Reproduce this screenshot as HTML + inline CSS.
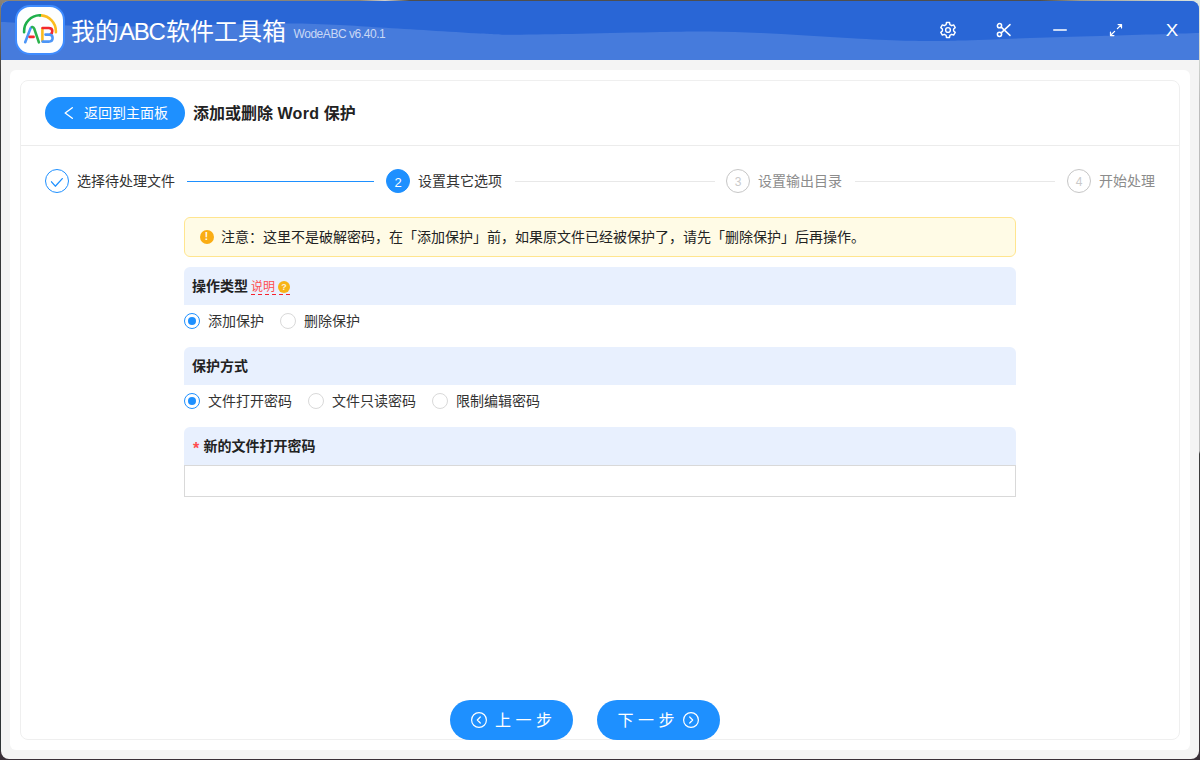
<!DOCTYPE html>
<html lang="zh-CN">
<head>
<meta charset="utf-8">
<title>我的ABC软件工具箱</title>
<style>
*{box-sizing:border-box;margin:0;padding:0}
html,body{width:1200px;height:760px;overflow:hidden}
body{font-family:"Liberation Sans","Noto Sans CJK SC",sans-serif;color:#222;position:relative;
background:linear-gradient(90deg,#8a8478 0,#8a8478 360px,#d0d0d0 385px,#4e4e4e 410px,#4e4e4e 1040px,#9a9a90 1080px,#dfe8e2 1200px);}
.bgl{position:absolute;left:0;top:0;width:2px;height:760px;background:linear-gradient(180deg,#8a8478 0,#3a3a3a 80px,#2e3436 760px)}
.bgr{position:absolute;right:0;top:0;width:2px;height:760px;background:linear-gradient(180deg,#dfe8e2 0,#d0d4d0 60px,#bdbdbd 100px,#bdbdbd 451px,#3c3c3c 454px,#3a3338 760px)}
.bgb{position:absolute;left:0;bottom:0;width:1200px;height:9px;background:#3a3038}
.win{position:absolute;left:1px;top:1px;width:1198px;height:758px;border-radius:8px;background:#f4f4f4;overflow:hidden}
.hdr{position:absolute;left:0;top:0;width:1198px;height:59px;background:#467bdc}
.hdr svg.wave{position:absolute;left:0;top:0}
.logo{position:absolute;left:14px;top:4px;width:50px;height:50px;border-radius:15px;background:#fdfeff;border:2.5px solid #3f8cff}
.title{position:absolute;left:70px;top:13px;font-size:24px;line-height:36px;color:#fff;white-space:nowrap}
.ver{position:absolute;left:292.5px;top:25px;font-size:12px;line-height:16px;color:#c9d8f5;white-space:nowrap;letter-spacing:-0.45px}
.ico{position:absolute}
.xbtn{position:absolute;left:1164px;top:19px;width:14px;text-align:center;font-size:17px;line-height:22px;color:#fff;transform:scaleX(1.1)}
.panel{position:absolute;left:9px;top:69px;width:1180px;height:680px;background:#fff;border-radius:6px}
.card{position:absolute;left:19px;top:79px;width:1160px;height:660px;background:#fff;border:1px solid #efefef;border-radius:8px}
.back{position:absolute;left:44px;top:96px;width:140px;height:32px;border-radius:16px;background:#1e90ff;color:#fff;font-size:14px;line-height:32px;white-space:nowrap}
.back span{position:absolute;left:39px;top:0}
.ptitle{position:absolute;left:192px;top:101px;font-size:16px;line-height:24px;font-weight:bold;color:#222;white-space:nowrap}
.hr{position:absolute;left:20px;top:144px;width:1158px;height:1px;background:#ececec}
.step{position:absolute;top:168px;height:24px;font-size:14px;line-height:24px;white-space:nowrap;color:#333}
.step .c{position:absolute;left:0;top:0;width:24px;height:24px;border-radius:50%;border:1px solid #1e90ff;text-align:center;font-size:12px;line-height:22px}
.step .t{position:absolute;left:32px;top:0}
.line{position:absolute;top:180px;height:1px;background:#e8e8e8}
.alert{position:absolute;left:183px;top:216px;width:832px;height:40px;border:1px solid #ffe58f;background:#fffbe6;border-radius:6px;font-size:14px;line-height:38px;color:#222;white-space:nowrap}
.alert span{position:absolute;left:36px;top:0}
.alert i{position:absolute;left:14.500px;top:12px;width:14px;height:14px;border-radius:50%;background:#faad14;color:#fff;font-style:normal;font-weight:bold;font-size:10px;line-height:14px;text-align:center}
.sec{position:absolute;left:183px;width:832px;height:38px;background:#e8f0fe;border-radius:6px 6px 0 0;font-size:14px;font-weight:bold;line-height:38px;padding-left:8px;color:#222;white-space:nowrap}
.tip{position:absolute;left:67px;top:12px;font-size:12px;line-height:16px;font-weight:normal;color:#ff4d4f;height:16px;width:39px;background:repeating-linear-gradient(90deg,#f5222d 0,#f5222d 4px,transparent 4px,transparent 7px) left bottom/39px 1px no-repeat}
.q{position:absolute;left:94px;top:14px;width:12px;height:12px;border-radius:50%;background:#f7b417;color:rgba(255,255,255,.85);font-style:normal;font-weight:bold;font-size:9px;line-height:12px;text-align:center}
.req{display:inline-block;width:11.500px;color:#ff4d4f;font-size:16px;font-weight:bold;position:relative;top:2.500px;left:1px;line-height:16px;vertical-align:top;margin-top:11px;height:16px}
.radio{position:absolute;height:20px;font-size:14px;line-height:20px;white-space:nowrap;color:#333}
.radio i{position:absolute;left:0;top:2px;width:16px;height:16px;border-radius:50%;border:1px solid #d9d9d9;background:#fff}
.radio.on i{border-color:#1e90ff}
.radio.on i:after{content:"";position:absolute;left:3px;top:3px;width:8px;height:8px;border-radius:50%;background:#1e90ff}
.radio span{position:absolute;left:24px;top:0}
.input{position:absolute;left:183px;top:464px;width:832px;height:32px;border:1px solid #d9d9d9;background:#fff}
.btn{position:absolute;top:699px;width:123px;height:40px;border-radius:20px;background:#1e90ff;color:#fff;font-size:16px;line-height:40px;white-space:nowrap}
</style>
</head>
<body>
<div class="bgl"></div><div class="bgr"></div><div class="bgb"></div>
<div class="win">
  <div class="hdr">
    <svg class="wave" width="1198" height="59" viewBox="0 0 1198 59"><path d="M-1.0 21.0C4.8 21.3 22.7 22.2 34.0 22.8C45.3 23.4 54.5 24.1 67.0 24.5C79.5 24.9 95.3 25.2 109.0 25.3C122.7 25.4 134.0 25.5 149.0 25.3C164.0 25.1 182.3 24.4 199.0 24.0C215.7 23.6 234.0 23.1 249.0 22.9C264.0 22.7 274.0 22.4 289.0 22.6C304.0 22.8 324.0 23.4 339.0 24.0C354.0 24.6 364.0 25.6 379.0 26.5C394.0 27.4 412.3 28.5 429.0 29.5C445.7 30.5 465.7 31.8 479.0 32.5C492.3 33.2 492.3 33.7 509.0 33.7C525.7 33.8 554.0 33.2 579.0 32.8C604.0 32.3 637.3 31.4 659.0 31.0C680.7 30.6 692.3 30.3 709.0 30.5C725.7 30.7 742.3 31.3 759.0 32.0C775.7 32.7 792.3 33.8 809.0 34.7C825.7 35.7 842.3 36.9 859.0 37.7C875.7 38.6 895.7 39.4 909.0 39.8C922.3 40.2 930.7 40.0 939.0 40.0C947.3 40.0 944.0 40.0 959.0 39.5C974.0 39.0 1005.7 37.8 1029.0 37.0C1052.3 36.2 1070.7 35.8 1099.0 35.0C1127.3 34.2 1182.3 32.5 1199.0 32.0V-1H-1Z" fill="#2966d6"/></svg>
    <div class="logo"><svg width="50" height="50" viewBox="15 5 50 50" style="position:absolute;left:-2.5px;top:-2.5px" fill="none" stroke-width="2.6" stroke-linecap="round" stroke-linejoin="round">
      <path d="M41 15.33A15.9 15.9 0 0 1 55.9 31.2V32.3" stroke="#fbbc1f"/>
      <path d="M24.1 32.3V31.2A15.9 15.9 0 0 1 39.500 15.310" stroke="#1eaf4b"/>
      <path d="M39 15.330A15.9 15.9 0 0 1 41 15.330" stroke="#1eaf4b" stroke-linecap="butt"/>
      <path d="M25.2 42.2L30.4 28.6Q31.2 27 32.2 27" stroke="#4c95f7"/>
      <path d="M32.2 27Q33.6 27 34.3 28.8L38.9 42.3" stroke="#2bb24c"/>
      <path d="M29.6 36.9H33.6" stroke="#f4282d"/>
      <path d="M42.4 28.6V41" stroke="#fbbc1f"/>
      <path d="M42.6 28H48.6Q52.3 28 52.3 31Q52.3 33.2 50.8 34" stroke="#f4282d"/>
      <path d="M45.5 34.6H49.5Q52.6 34.8 52.6 38Q52.6 41.6 48.6 41.6H42.6" stroke="#4c95f7"/>
    </svg></div>
    <div class="title">我的<span style="letter-spacing:-1.2px;margin-right:1.2px">ABC</span>软件工具箱</div>
    <div class="ver">WodeABC v6.40.1</div>
    <svg class="ico" style="left:938px;top:20px" width="18" height="18" viewBox="0 0 18 18" fill="none" stroke="#fff" stroke-width="1.4" stroke-linejoin="round"><path d="M7.13 3.62L7.42 1.57L10.58 1.57L10.87 3.62L12.72 4.69L14.65 3.91L16.23 6.65L14.60 7.93L14.60 10.07L16.23 11.35L14.65 14.09L12.72 13.31L10.87 14.38L10.58 16.43L7.42 16.43L7.13 14.38L5.28 13.31L3.35 14.09L1.77 11.35L3.40 10.07L3.40 7.93L1.77 6.65L3.35 3.91L5.28 4.69Z"/><circle cx="9" cy="9" r="2.4"/></svg>
    <svg class="ico" style="left:994px;top:20px" width="18" height="18" viewBox="0 0 18 18" fill="none" stroke="#fff" stroke-width="1.5" stroke-linecap="round"><circle cx="4.500" cy="4.700" r="2.100"/><circle cx="4.500" cy="13.300" r="2.100"/><path d="M6.200 6.100L15 14.400M6.200 11.900L15 3.600"/></svg>
    <svg class="ico" style="left:1051px;top:20px" width="18" height="18" viewBox="0 0 18 18" fill="none" stroke="#fff" stroke-width="1.600" stroke-linecap="round"><path d="M1.800 9H14.200"/></svg>
    <svg class="ico" style="left:1106px;top:18px" width="18" height="20" viewBox="0 0 18 20" fill="none" stroke="#fff" stroke-width="1.250" stroke-linecap="round" stroke-linejoin="round"><path d="M10.400 9.600L14.300 5.700M11.100 5.500H14.500V8.900M7.600 12.400L3.700 16.300M3.500 13.100V16.500H6.900"/></svg>
    <div class="xbtn">X</div>
  </div>
  <div class="panel"></div>
  <div class="card"></div>
  <div class="back"><svg width="12" height="14" viewBox="0 0 12 14" style="position:absolute;left:18px;top:9px" fill="none" stroke="#fff" stroke-width="1.400" stroke-linecap="round" stroke-linejoin="round"><path d="M9.300 1.700L2.200 7L9.300 12.300"/></svg><span>返回到主面板</span></div>
  <div class="ptitle">添加或删除 <span style="letter-spacing:.3px">Word</span> 保护</div>
  <div class="hr"></div>

  <div class="step" style="left:44px"><div class="c"><svg width="14" height="12" viewBox="0 0 14 12" style="position:absolute;left:3.500px;top:5.500px" fill="none" stroke="#1e90ff" stroke-width="1.300" stroke-linecap="round" stroke-linejoin="round"><path d="M1.500 5.800L5.300 10.200L12.300 2.600"/></svg></div><div class="t">选择待处理文件</div></div>
  <div class="line" style="left:186px;width:187px;background:#1e90ff"></div>
  <div class="step" style="left:385px"><div class="c" style="background:#1e90ff;color:#fff;font-size:13px;line-height:25px">2</div><div class="t">设置其它选项</div></div>
  <div class="line" style="left:514px;width:200px"></div>
  <div class="step" style="left:725px;color:#8c8c8c"><div class="c" style="border-color:#c6c6c6;color:#cacaca;line-height:25px">3</div><div class="t">设置输出目录</div></div>
  <div class="line" style="left:854px;width:200px"></div>
  <div class="step" style="left:1066px;color:#8c8c8c"><div class="c" style="border-color:#c6c6c6;color:#cacaca;line-height:25px">4</div><div class="t">开始处理</div></div>

  <div class="alert"><i>!</i><span>注意：这里不是破解密码，在「添加保护」前，如果原文件已经被保护了，请先「删除保护」后再操作。</span></div>

  <div class="sec" style="top:266px">操作类型<a class="tip">说明</a><i class="q">?</i></div>
  <div class="radio on" style="left:183px;top:310px"><i></i><span>添加保护</span></div>
  <div class="radio" style="left:279px;top:310px"><i></i><span>删除保护</span></div>

  <div class="sec" style="top:346px">保护方式</div>
  <div class="radio on" style="left:183px;top:390px"><i></i><span>文件打开密码</span></div>
  <div class="radio" style="left:307px;top:390px"><i></i><span>文件只读密码</span></div>
  <div class="radio" style="left:431px;top:390px"><i></i><span>限制编辑密码</span></div>

  <div class="sec" style="top:426px"><b class="req">*</b>新的文件打开密码</div>
  <div class="input"></div>

  <div class="btn" style="left:449px"><svg width="18" height="18" viewBox="0 0 18 18" style="position:absolute;left:20px;top:11.200px" fill="none" stroke="#fff" stroke-width="1.200" stroke-linecap="round" stroke-linejoin="round"><circle cx="9" cy="9" r="7.400"/><path d="M10.300 6L7.300 9L10.300 12"/></svg><span style="position:absolute;left:45px;top:1px">上 一 步</span></div>
  <div class="btn" style="left:596px"><span style="position:absolute;left:20.500px;top:1px">下 一 步</span><svg width="18" height="18" viewBox="0 0 18 18" style="position:absolute;left:85px;top:11.200px" fill="none" stroke="#fff" stroke-width="1.200" stroke-linecap="round" stroke-linejoin="round"><circle cx="9" cy="9" r="7.400"/><path d="M7.700 6L10.700 9L7.700 12"/></svg></div>
</div>
</body>
</html>
